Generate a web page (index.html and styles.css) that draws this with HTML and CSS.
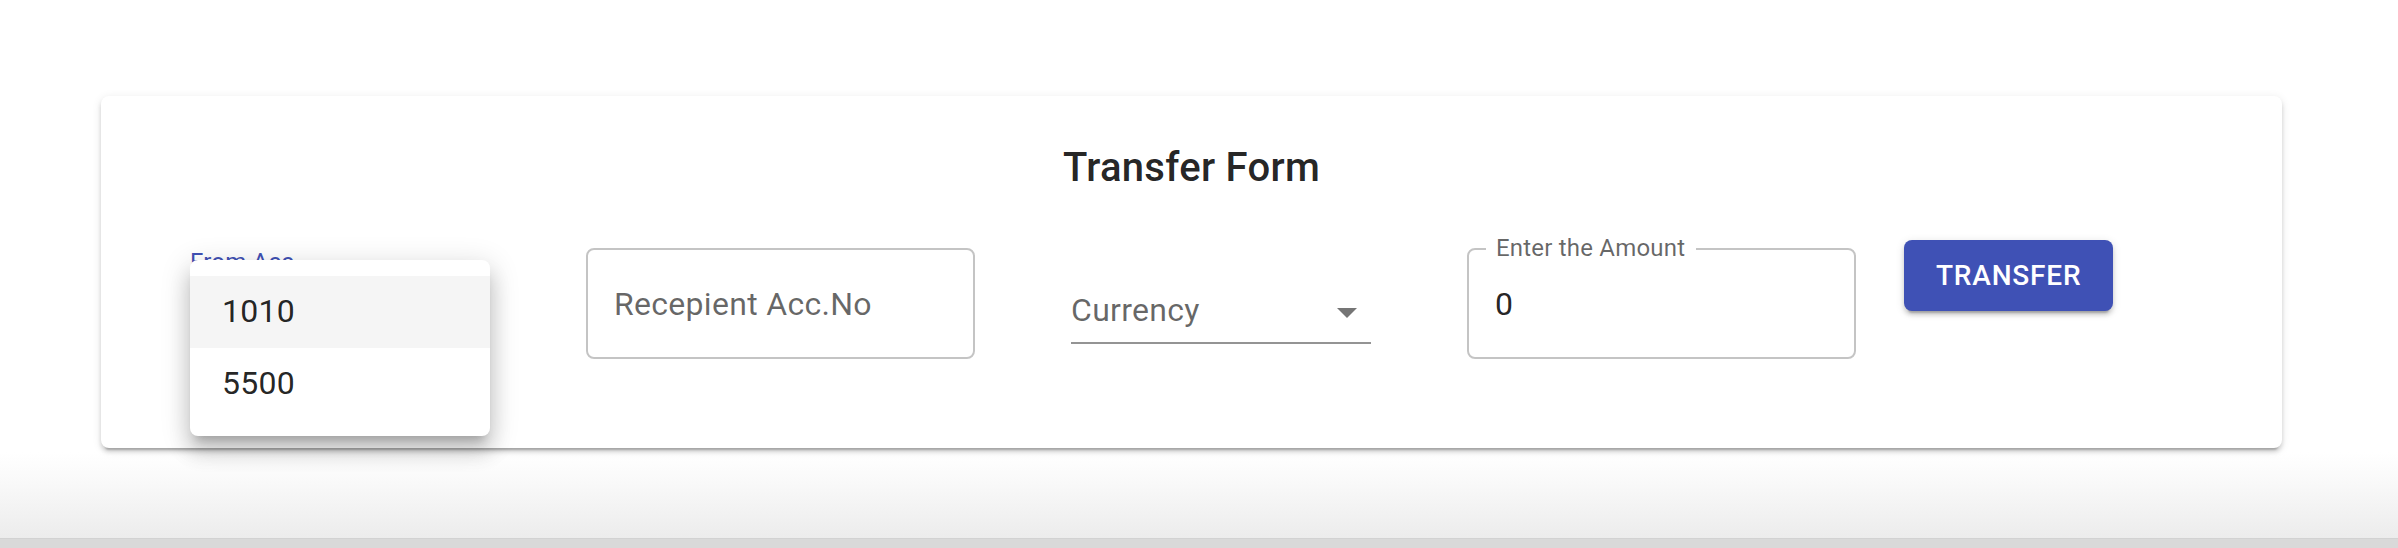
FILE: index.html
```html
<!DOCTYPE html>
<html lang="en">
<head>
<meta charset="utf-8">
<title>Transfer Form</title>
<link rel="stylesheet" href="styles.css">
</head>
<body>
<div class="page">
  <main class="content">
    <section class="card">
      <h6 class="title">Transfer Form</h6>
      <form class="row">
        <div class="field select-field">
          <label class="select-label focused">From Acc</label>
          <div class="select-input focused-line">
            <svg class="arrow" viewBox="0 0 24 24"><path d="M7 10l5 5 5-5z"/></svg>
          </div>
          <ul class="menu">
            <li class="menu-item active">1010</li>
            <li class="menu-item">5500</li>
          </ul>
        </div>
        <div class="field outlined">
          <span class="outlined-text placeholder">Recepient Acc.No</span>
        </div>
        <div class="field select-field">
          <div class="select-label"></div>
          <div class="select-input">
            <span class="placeholder">Currency</span>
            <svg class="arrow" viewBox="0 0 24 24"><path d="M7 10l5 5 5-5z"/></svg>
          </div>
        </div>
        <div class="field outlined">
          <span class="notch-label">Enter the Amount</span>
          <span class="outlined-text value">0</span>
        </div>
        <button type="button" class="btn">Transfer</button>
      </form>
    </section>
  </main>
  <div class="bar"></div>
</div>
</body>
</html>
```
FILE: styles.css
```css
* {
  box-sizing: border-box;
}

body {
  margin: 0;
  background: #fff;
  font-family: Roboto, "Liberation Sans", Arial, sans-serif;
}

.page {
  height: 548px;
  display: flex;
  flex-direction: column;
}

.content {
  flex: 1;
  background: linear-gradient(to bottom, #ffffff 0, #ffffff 452px, #fafafa 478px, #ececec 538px);
}

.card {
  margin: 96px 116px 0 101px;
  height: 352px;
  padding-top: 40px;
  background: #fff;
  border-radius: 8px;
  box-shadow: 0 6px 2px -4px rgba(0, 0, 0, 0.2), 0 4px 4px 0 rgba(0, 0, 0, 0.14), 0 2px 10px 0 rgba(0, 0, 0, 0.1);
}

.title {
  margin: 0;
  text-align: center;
  font-size: 40px;
  font-weight: 500;
  line-height: 64px;
  letter-spacing: 0.3px;
  color: rgba(0, 0, 0, 0.87);
}

.row {
  display: flex;
  align-items: flex-start;
  margin: 40px 0 0;
  padding-left: 41px;
}

.field {
  position: relative;
  margin: 8px 48px 0;
}

.select-field {
  width: 300px;
  height: 96px;
}

.select-label {
  display: block;
  height: 32px;
  font-size: 24px;
  line-height: 28px;
  letter-spacing: 0.2px;
  color: rgba(0, 0, 0, 0.6);
}

.select-label.focused {
  color: #3f51b5;
}

.select-input {
  position: relative;
  height: 64px;
  padding-top: 7px;
  border-bottom: 2px solid rgba(0, 0, 0, 0.42);
  font-size: 32px;
  line-height: 46px;
  letter-spacing: 0.3px;
  color: rgba(0, 0, 0, 0.87);
}

.select-input.focused-line {
  border-bottom-color: #3f51b5;
}

.placeholder {
  color: rgba(0, 0, 0, 0.6);
}

.arrow {
  position: absolute;
  right: 0;
  top: 8px;
  width: 48px;
  height: 48px;
  fill: rgba(0, 0, 0, 0.54);
}

.menu {
  position: absolute;
  top: 12px;
  left: 0;
  z-index: 2;
  width: 300px;
  margin: 0;
  padding: 16px 0;
  list-style: none;
  background: #fff;
  border-radius: 8px;
  box-shadow: 0 10px 10px -6px rgba(0, 0, 0, 0.2), 0 16px 20px 2px rgba(0, 0, 0, 0.14), 0 6px 28px 4px rgba(0, 0, 0, 0.12);
}

.menu-item {
  padding: 11px 32px 13px;
  font-size: 32px;
  line-height: 48px;
  letter-spacing: 0.3px;
  color: rgba(0, 0, 0, 0.87);
}

.menu-item.active {
  background: rgba(0, 0, 0, 0.04);
}

.outlined {
  width: 389px;
  height: 111px;
  padding: 31px 26px;
  border: 2px solid rgba(0, 0, 0, 0.23);
  border-radius: 8px;
  font-size: 32px;
  line-height: 46px;
  letter-spacing: 0.3px;
}

.outlined-text {
  display: block;
}

.value {
  color: rgba(0, 0, 0, 0.87);
}

.notch-label {
  position: absolute;
  top: -16px;
  left: 17px;
  padding: 0 11px 0 10px;
  background: #fff;
  font-size: 24px;
  line-height: 28px;
  letter-spacing: 0.2px;
  color: rgba(0, 0, 0, 0.6);
}

.btn {
  height: 71px;
  padding: 0 32px;
  border: none;
  border-radius: 8px;
  background: #3f51b5;
  color: #fff;
  font-family: Roboto, "Liberation Sans", Arial, sans-serif;
  font-size: 28px;
  font-weight: 500;
  letter-spacing: 0.8px;
  text-transform: uppercase;
  box-shadow: 0 6px 2px -4px rgba(0, 0, 0, 0.2), 0 4px 4px 0 rgba(0, 0, 0, 0.14), 0 2px 10px 0 rgba(0, 0, 0, 0.12);
}

.bar {
  height: 10px;
  background: #d9d9d9;
  border-top: 1px solid #d2d2d2;
}
```
